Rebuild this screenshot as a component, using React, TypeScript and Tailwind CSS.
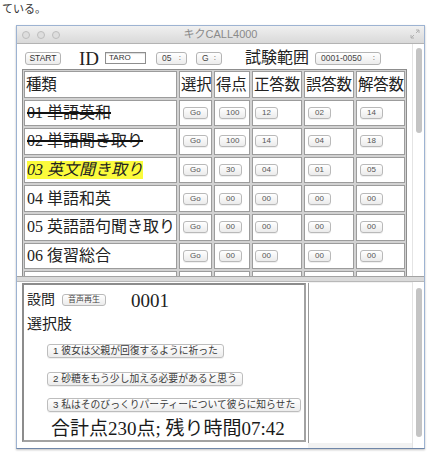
import React from "react";

const serif = "font-['Liberation_Serif','Noto_Sans_CJK_JP',serif]";
const sans = "font-['Liberation_Sans','Noto_Sans_CJK_JP',sans-serif]";

type Row = {
  name: string;
  score: string;
  ok: string;
  ng: string;
  total: string;
  mode?: "strike" | "mark";
};

const rows: Row[] = [
  { name: "01 単語英和", score: "100", ok: "12", ng: "02", total: "14", mode: "strike" },
  { name: "02 単語聞き取り", score: "100", ok: "14", ng: "04", total: "18", mode: "strike" },
  { name: "03 英文聞き取り", score: "30", ok: "04", ng: "01", total: "05", mode: "mark" },
  { name: "04 単語和英", score: "00", ok: "00", ng: "00", total: "00" },
  { name: "05 英語語句聞き取り", score: "00", ok: "00", ng: "00", total: "00" },
  { name: "06 復習総合", score: "00", ok: "00", ng: "00", total: "00" },
];

const headers = ["種類", "選択", "得点", "正答数", "誤答数", "解答数"];

function SmallBtn({ children }: { children: React.ReactNode }) {
  return (
    <span
      className={`${sans} inline-flex h-[12px] items-center justify-center rounded-[3px] border border-[#b9b9b9] bg-gradient-to-b from-white to-[#ebebeb] px-[6px] text-[8px] leading-none text-[#555] shadow-[0_1px_0_rgba(0,0,0,0.06)]`}
    >
      {children}
    </span>
  );
}

function Select({ label, w }: { label: string; w: string }) {
  return (
    <span
      className={`${sans} flex h-[13px] items-center justify-between rounded-[3px] border border-[#b4b4b4] bg-gradient-to-b from-white to-[#ececec] px-[5px] text-[8.5px] leading-none text-[#444] ${w}`}
    >
      <span>{label}</span>
      <span className="text-[8px]">:</span>
    </span>
  );
}

function Cell({ children, pl }: { children?: React.ReactNode; pl: string }) {
  return (
    <div className={`flex h-[26.6px] items-center overflow-hidden whitespace-nowrap border border-[#9c9c9c] bg-white ${pl}`}>
      {children}
    </div>
  );
}

function Scrollbar({ top, h }: { top: string; h: string }) {
  return (
    <div className="w-[12px] shrink-0 border-l border-[#e4e4e4] bg-white">
      <div className={`ml-[3px] w-[6px] rounded-full bg-[#c4c4c4] ${top} ${h}`} />
    </div>
  );
}

function ChoiceBtn({ children, mt }: { children: React.ReactNode; mt: string }) {
  return (
    <div className={`ml-[23px] flex h-[14px] ${mt}`}>
      <span
        className={`${sans} flex h-[14px] items-center whitespace-nowrap rounded-[3px] border border-[#bdbdbd] bg-gradient-to-b from-white to-[#ececec] px-[5px] text-[9.8px] leading-none text-[#3a3a3a] shadow-[0_1px_0_rgba(0,0,0,0.06)]`}
      >
        {children}
      </span>
    </div>
  );
}

export default function App() {
  return (
    <div className="h-[456px] w-[429px] overflow-hidden bg-white">
      <div className={`${sans} h-[25px] pl-[2px] pt-[2px] text-[11px] leading-[14px] text-[#333]`}>
        ている。
      </div>

      {/* window */}
      <div className="ml-[16px] flex h-[424px] w-[409px] flex-col border border-[#9db3d2] border-b-[#6f86a8] bg-white shadow-[0_1px_2px_rgba(0,0,0,0.25)]">
        {/* title bar */}
        <div className="relative flex h-[18px] shrink-0 items-center border-b border-[#b3b3b3] bg-gradient-to-b from-[#f0f0f0] to-[#d9d9d9]">
          <div className="ml-[5px] flex gap-[7px]">
            <span className="h-[8px] w-[8px] rounded-full border border-[#bdbdbd] bg-[#dedede]" />
            <span className="h-[8px] w-[8px] rounded-full border border-[#bdbdbd] bg-[#dedede]" />
            <span className="h-[8px] w-[8px] rounded-full border border-[#bdbdbd] bg-[#dedede]" />
          </div>
          <div className={`${sans} absolute inset-x-0 top-0 flex h-[17px] items-center justify-center text-[11px] leading-none text-[#8a8a8a]`}>
            キクCALL4000
          </div>
          <svg className="absolute right-[4px] top-[3px]" width="10" height="10" viewBox="0 0 10 10">
            <path d="M6 1h3v3M9 1L6 4M1 6v3h3M1 9l3-3" stroke="#b0b0b0" strokeWidth="1" fill="none" />
          </svg>
        </div>

        {/* upper pane: toolbar + table */}
        <div className="flex h-[232px] shrink-0 overflow-hidden">
          <div className="flex-1 overflow-hidden">
            <div className="flex h-[24px] items-center pl-[8px] pt-[4px]">
              <span
                className={`${sans} inline-flex h-[13px] w-[36px] items-center justify-center rounded-[3px] border border-[#b4b4b4] bg-gradient-to-b from-white to-[#ebebeb] text-[8.5px] leading-none text-[#333]`}
              >
                START
              </span>
              <span className={`${serif} ml-[18px] flex h-[20px] items-center text-[19px] leading-none text-[#222]`}>ID</span>
              <span className={`${sans} ml-[6px] flex h-[12px] w-[41px] items-center border border-[#8e8e8e] bg-white pl-[3px] text-[8px] leading-none text-[#333] shadow-[inset_0_1px_1px_rgba(0,0,0,0.15)]`}>
                TARO
              </span>
              <span className="ml-[10px]">
                <Select label="05" w="w-[31px]" />
              </span>
              <span className="ml-[9px]">
                <Select label="G" w="w-[26px]" />
              </span>
              <span className={`${serif} ml-[23px] flex h-[20px] items-center whitespace-nowrap text-[16px] leading-none text-[#222]`}>
                試験範囲
              </span>
              <span className="ml-[6px]">
                <Select label="0001-0050" w="w-[66px]" />
              </span>
            </div>

            <div className="ml-[5px] mt-[1px] w-fit border border-[#8d8d8d] bg-[#d2d2d2] p-[1px]">
              <div className="grid grid-cols-[153px_33px_36px_50px_50px_49px] gap-[2px]">
                {headers.map((h) => (
                  <div
                    key={h}
                    className={`${serif} flex h-[26.6px] items-center overflow-hidden whitespace-nowrap border border-[#9c9c9c] bg-white pl-[1px] text-[15.5px] leading-none tracking-[-0.3px] text-[#222]`}
                  >
                    {h}
                  </div>
                ))}
                {rows.map((r) => (
                  <React.Fragment key={r.name}>
                    <Cell pl="pl-[2px]">
                      <span
                        className={`${serif} text-[16px] leading-[18px] text-[#222] ${
                          r.mode === "strike" ? "line-through decoration-[#111] decoration-[1.5px]" : ""
                        } ${r.mode === "mark" ? "bg-[#fbfb3c] italic" : ""}`}
                      >
                        {r.name}
                      </span>
                    </Cell>
                    <Cell pl="pl-[3px]">
                      <SmallBtn>Go</SmallBtn>
                    </Cell>
                    <Cell pl="pl-[4px]">
                      <SmallBtn>{r.score}</SmallBtn>
                    </Cell>
                    <Cell pl="pl-[2px]">
                      <SmallBtn>{r.ok}</SmallBtn>
                    </Cell>
                    <Cell pl="pl-[3px]">
                      <SmallBtn>{r.ng}</SmallBtn>
                    </Cell>
                    <Cell pl="pl-[3px]">
                      <SmallBtn>{r.total}</SmallBtn>
                    </Cell>
                  </React.Fragment>
                ))}
                <Cell pl="" />
                <Cell pl="" />
                <Cell pl="" />
                <Cell pl="" />
                <Cell pl="" />
                <Cell pl="" />
              </div>
            </div>
          </div>
          <Scrollbar top="mt-[4px]" h="h-[85px]" />
        </div>

        {/* split divider */}
        <div className="h-[6px] shrink-0 border-y border-t-[#a3a3a3] border-b-[#b8b8b8] bg-[#dadada]" />

        {/* lower pane */}
        <div className="flex flex-1 overflow-hidden bg-[#f2f2f2]">
          <div className="flex w-[291px] shrink-0 bg-white pl-[5px] pt-[1px]">
            <div className="h-[159px] w-[284px] border-2 border-[#a2a2a2] border-l-[#8c8c8c] border-t-[#8c8c8c] bg-white">
              <div className="ml-[3px] mt-[6px] flex h-[18px] items-center">
                <span className={`${serif} text-[14px] leading-none text-[#222]`}>設問</span>
                <span className="ml-[7px] flex">
                  <span
                    className={`${sans} flex h-[12px] items-center rounded-[3px] border border-[#b9b9b9] bg-gradient-to-b from-white to-[#ebebeb] px-[5px] text-[8px] leading-none text-[#444]`}
                  >
                    音声再生
                  </span>
                </span>
                <span className={`${serif} ml-[25px] text-[19px] leading-none text-[#222]`}>0001</span>
              </div>
              <div className={`${serif} ml-[3px] mt-[6px] flex h-[18px] items-center text-[15px] leading-none text-[#222]`}>
                選択肢
              </div>
              <ChoiceBtn mt="mt-[11px]">1 彼女は父親が回復するように祈った</ChoiceBtn>
              <ChoiceBtn mt="mt-[14px]">2 砂糖をもう少し加える必要があると思う</ChoiceBtn>
              <ChoiceBtn mt="mt-[12px]">3 私はそのびっくりパーティーについて彼らに知らせた</ChoiceBtn>
              <div className={`${serif} ml-[27px] mt-[4px] flex h-[24px] items-center whitespace-nowrap text-[19px] leading-none text-[#1a1a1a]`}>
                合計点230点; 残り時間07:42
              </div>
            </div>
          </div>
          <div className="mt-[1px] h-[160px] flex-1 border-l border-[#9a9a9a] bg-white" />
          <Scrollbar top="mt-[6px]" h="h-[149px]" />
        </div>
      </div>
    </div>
  );
}
